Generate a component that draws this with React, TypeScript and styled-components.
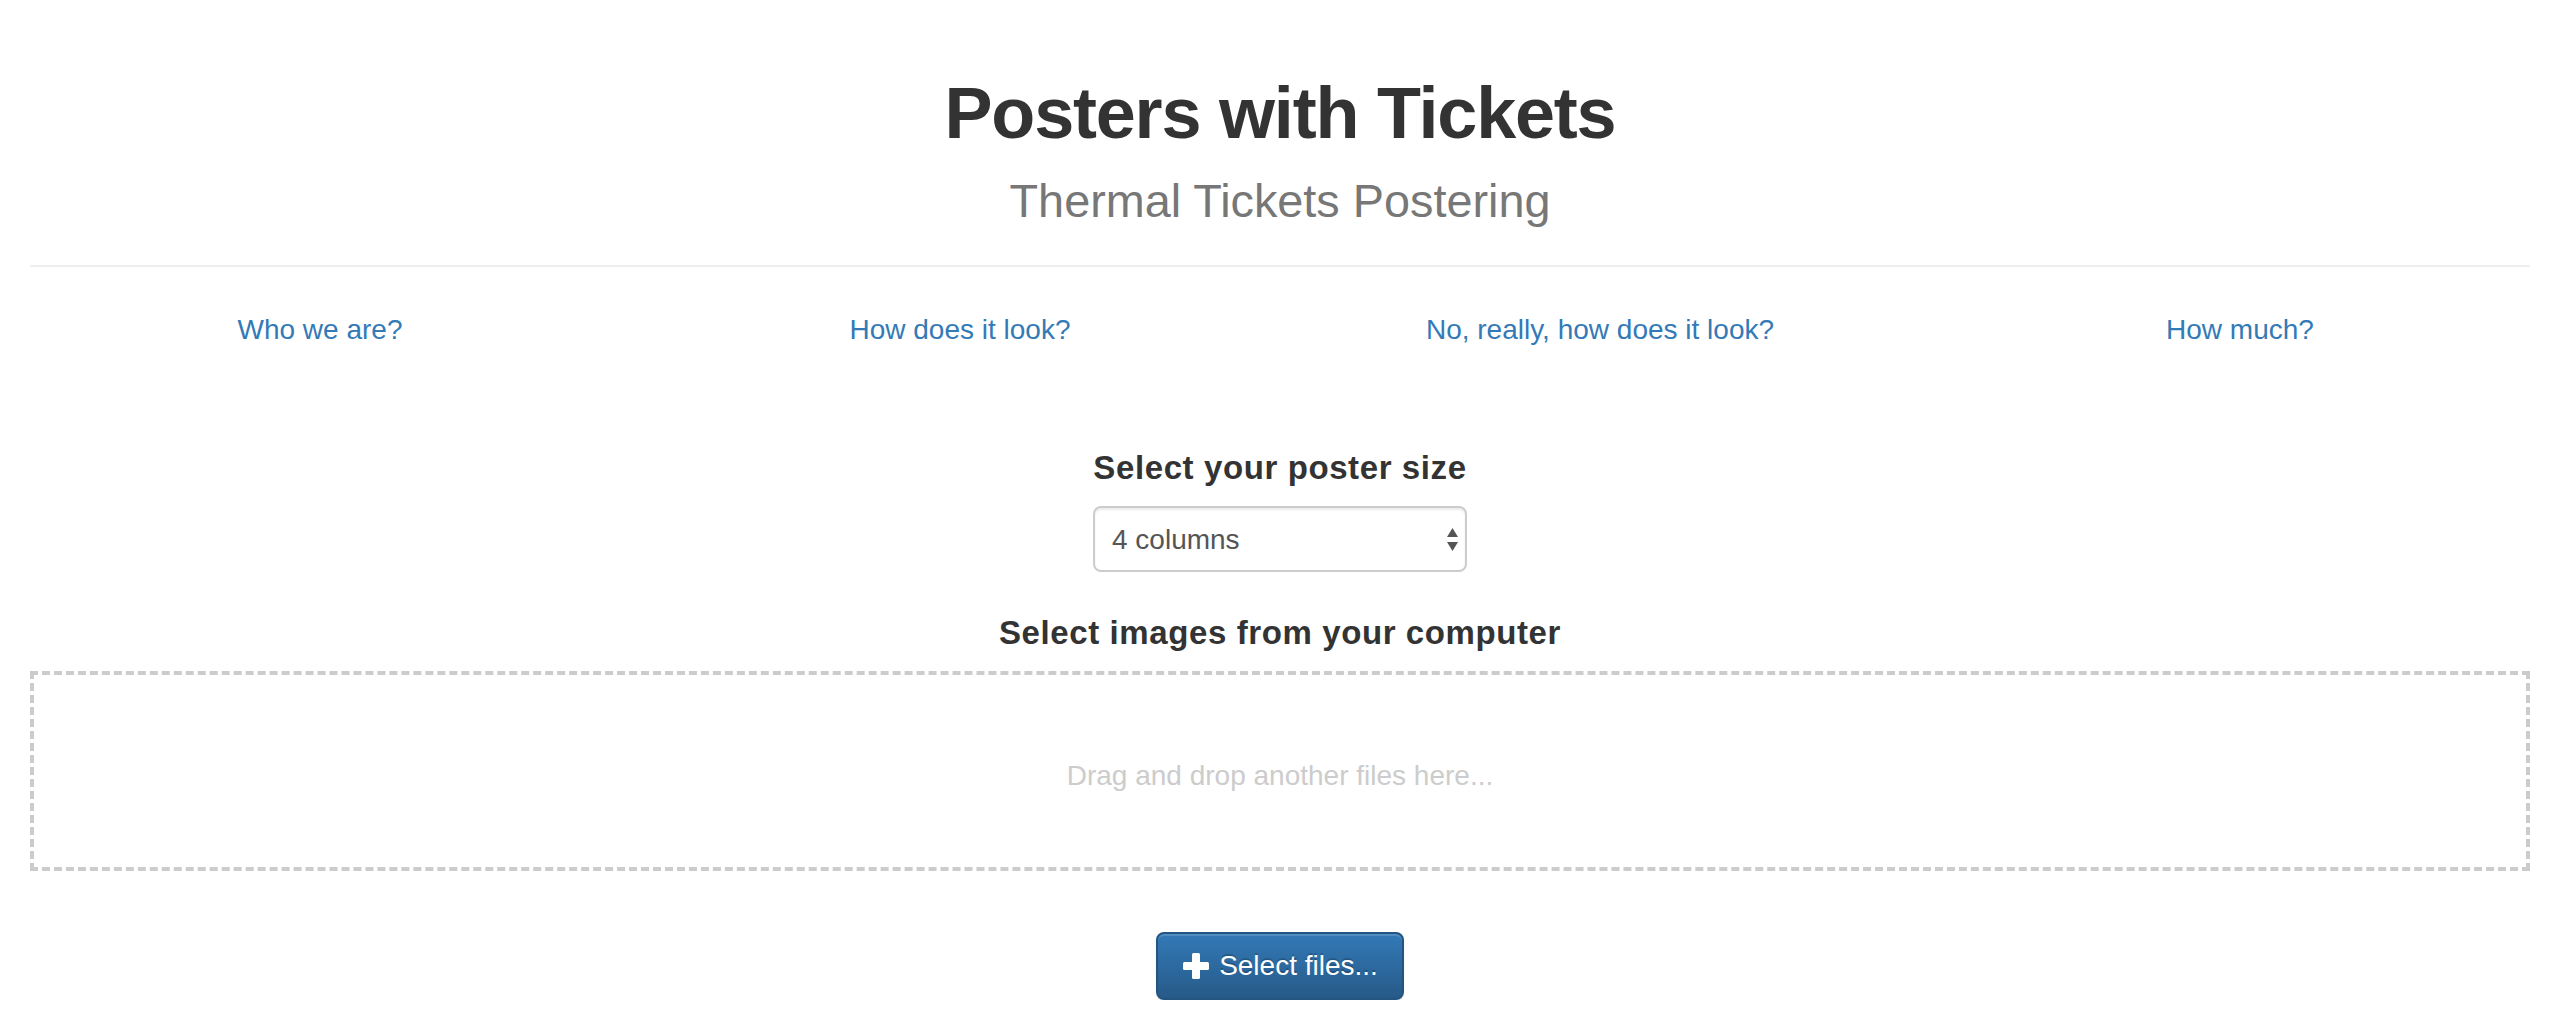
import React from "react";
import styled, { createGlobalStyle } from "styled-components";

const GlobalStyle = createGlobalStyle`
  html, body {
    margin: 0;
    padding: 0;
    background: #fff;
  }
  body {
    font-family: "Liberation Sans", Arial, sans-serif;
    color: #333;
    font-size: 28px;
    line-height: 40px;
  }
  * {
    box-sizing: border-box;
  }
`;

const Page = styled.div`
  width: 2560px;
  overflow: hidden;
`;

const Header = styled.header`
  margin: 0 30px;
  padding-top: 74px;
  padding-bottom: 33px;
  border-bottom: 2px solid #eee;
  text-align: center;
`;

const Title = styled.h1`
  margin: 0;
  font-size: 72px;
  line-height: 79.2px;
  font-weight: 700;
  letter-spacing: -1.2px;
  color: #333;
`;

const Subtitle = styled.small`
  font-size: 46.8px;
  line-height: 1;
  font-weight: 400;
  letter-spacing: 0;
  color: #777;
`;

const Nav = styled.nav`
  display: grid;
  grid-template-columns: repeat(4, 1fr);
  margin-top: 43px;
  text-align: center;
`;

const NavLink = styled.a`
  color: #337ab7;
  text-decoration: none;
  font-size: 28px;
  line-height: 40px;
`;

const Form = styled.section`
  display: flex;
  flex-direction: column;
  align-items: center;
  padding: 0 30px;
`;

const Label = styled.label<{ $top: number }>`
  display: block;
  margin-top: ${(p) => p.$top}px;
  margin-bottom: 18px;
  font-size: 33px;
  line-height: 40px;
  font-weight: 700;
  letter-spacing: 0.6px;
  color: #333;
`;

const SelectWrap = styled.div`
  position: relative;
  width: 374px;
  height: 66px;
`;

const Select = styled.select`
  appearance: none;
  -webkit-appearance: none;
  width: 100%;
  height: 100%;
  padding: 0 40px 0 17px;
  border: 2px solid #ccc;
  border-radius: 8px;
  background: #fff;
  box-shadow: inset 0 2px 2px rgba(0, 0, 0, 0.075);
  font-family: "Liberation Sans", Arial, sans-serif;
  font-size: 28px;
  color: #555;
  outline: none;
`;

const Arrows = styled.svg`
  position: absolute;
  right: 9px;
  top: 22px;
  pointer-events: none;
`;

const DropZone = styled.div`
  width: 100%;
  height: 200px;
  border: 4px dashed #ccc;
  display: flex;
  align-items: center;
  justify-content: center;
`;

const DropText = styled.span`
  font-size: 28px;
  line-height: 40px;
  color: #ccc;
  padding-top: 10px;
`;

const Button = styled.button`
  margin-top: 61px;
  display: inline-flex;
  align-items: center;
  gap: 10px;
  height: 68px;
  padding: 0 24px 0 25px;
  border: 2px solid #245580;
  border-radius: 8px;
  background-image: linear-gradient(to bottom, #337ab7 0%, #265a88 100%);
  box-shadow: inset 0 2px 0 rgba(255, 255, 255, 0.15), 0 2px 2px rgba(0, 0, 0, 0.075);
  color: #fff;
  font-family: "Liberation Sans", Arial, sans-serif;
  font-size: 28px;
  line-height: 40px;
  text-shadow: 0 -2px 0 rgba(0, 0, 0, 0.2);
  cursor: pointer;
`;

const PlusIcon = () => (
  <svg width="26" height="26" viewBox="0 0 26 26">
    <rect x="9" y="0" width="8" height="26" rx="1.5" fill="#fff" />
    <rect x="0" y="9" width="26" height="8" rx="1.5" fill="#fff" />
  </svg>
);

const links = [
  "Who we are?",
  "How does it look?",
  "No, really, how does it look?",
  "How much?",
];

export default function App() {
  return (
    <Page>
      <GlobalStyle />
      <Header>
        <Title>
          Posters with Tickets
          <br />
          <Subtitle>Thermal Tickets Postering</Subtitle>
        </Title>
      </Header>
      <Nav>
        {links.map((l) => (
          <div key={l}>
            <NavLink href="#">{l}</NavLink>
          </div>
        ))}
      </Nav>
      <Form>
        <Label $top={98} htmlFor="size">
          Select your poster size
        </Label>
        <SelectWrap>
          <Select id="size" defaultValue="4">
            <option value="2">2 columns</option>
            <option value="3">3 columns</option>
            <option value="4">4 columns</option>
            <option value="5">5 columns</option>
          </Select>
          <Arrows width="11" height="23" viewBox="0 0 11 23">
            <polygon points="5.5,0 11,9 0,9" fill="#555" />
            <polygon points="0,14 11,14 5.5,23" fill="#555" />
          </Arrows>
        </SelectWrap>
        <Label $top={41}>Select images from your computer</Label>
        <DropZone>
          <DropText>Drag and drop another files here...</DropText>
        </DropZone>
        <Button type="button">
          <PlusIcon />
          Select files...
        </Button>
      </Form>
    </Page>
  );
}
